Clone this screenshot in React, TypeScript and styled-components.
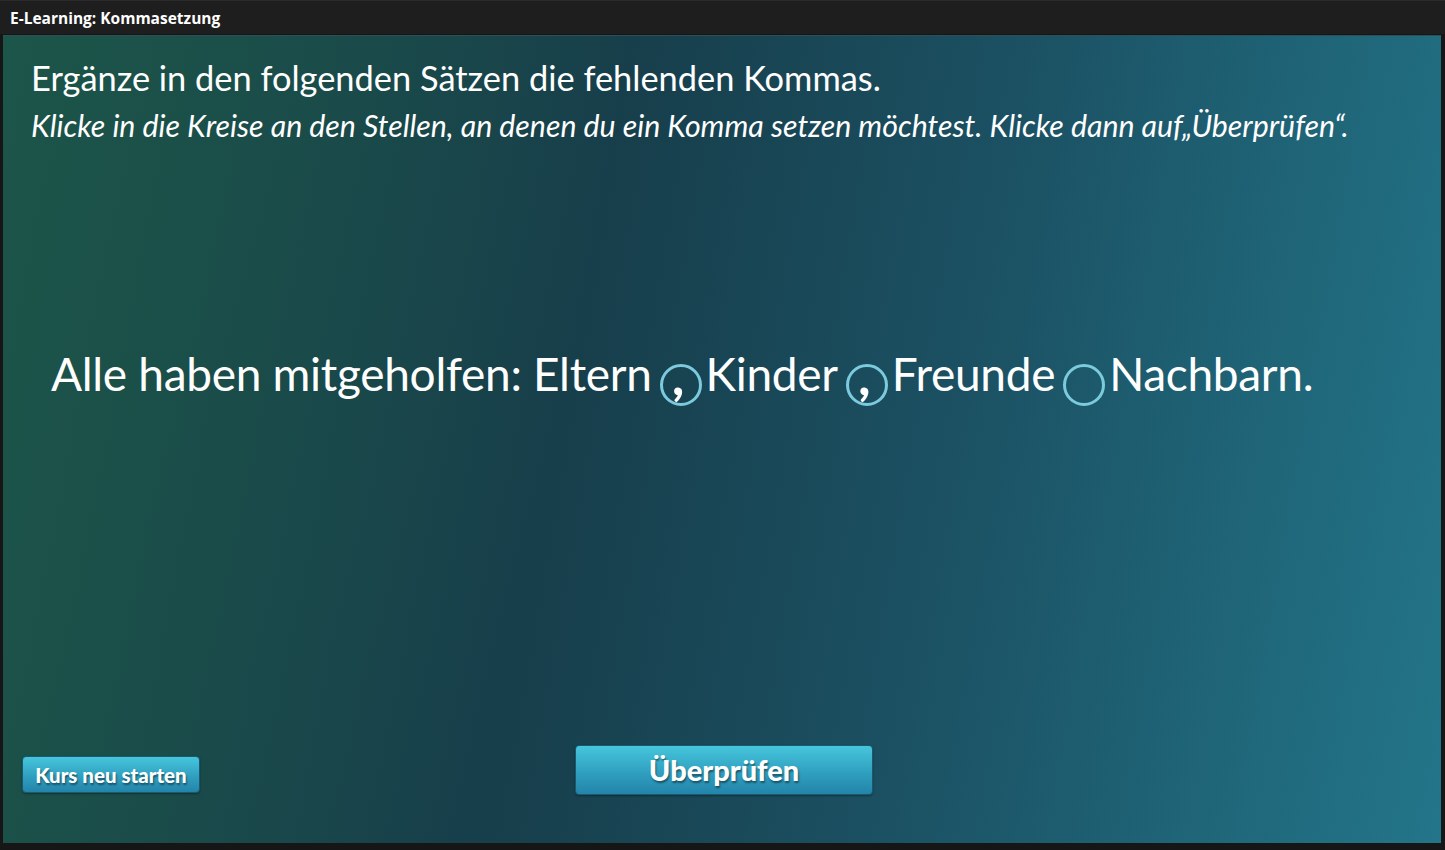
import React, { useState } from 'react'
import styled, { createGlobalStyle } from 'styled-components'

const GlobalStyle = createGlobalStyle`
  html, body {
    margin: 0;
    padding: 0;
    background: #141414;
  }
  body {
    font-family: 'Lato', 'Open Sans', sans-serif;
  }
`

const Window = styled.div`
  width: 1445px;
  height: 850px;
  display: flex;
  flex-direction: column;
  background: #161616;
  overflow: hidden;
`

const TitleBar = styled.div`
  height: 34px;
  flex: none;
  display: flex;
  align-items: center;
  padding: 0 10px;
  background: #1e1e1e;
  border-top: 1px solid #2a2a2a;
  box-sizing: border-box;
  color: #ffffff;
  font-family: 'Open Sans', sans-serif;
  font-weight: 700;
  font-size: 15.5px;
`

const Stage = styled.div`
  flex: none;
  height: 808px;
  margin: 1px 4px 0 3px;
  display: flex;
  flex-direction: column;
  box-sizing: border-box;
  border-top: 1px solid #2d4f57;
  background:
    linear-gradient(105deg, rgba(30, 90, 72, 0.55) 0%, rgba(30, 90, 72, 0) 40%),
    linear-gradient(100deg, #1a4f4a 0%, #173e4b 40%, #1b5163 65%, #237589 100%);
  color: #ffffff;
`

const Header = styled.div`
  padding: 22px 0 0 28px;
  display: flex;
  flex-direction: column;
  gap: 9px;
`

const Heading = styled.h1`
  margin: 0;
  font-weight: 400;
  font-size: 34.4px;
  line-height: 40px;
`

const Instruction = styled.p`
  margin: 0;
  font-style: italic;
  font-weight: 400;
  font-size: 30.3px;
  line-height: 36px;
`

const SentenceArea = styled.div`
  flex: 1;
  display: flex;
  align-items: center;
  padding: 0 0 140px 48px;
`

const Sentence = styled.div`
  display: flex;
  align-items: center;
  font-size: 46px;
  letter-spacing: -0.3px;
  white-space: pre;
`

const Word = styled.span`
  line-height: 1;
`

const Gap = styled.button<{ $set: boolean }>`
  width: 42px;
  height: 42px;
  margin: 22px 4px 0 8px;
  padding: 0;
  border-radius: 50%;
  border: 3px solid #7ccadd;
  background: transparent;
  color: #ffffff;
  font-family: 'Lato', sans-serif;
  font-weight: 900;
  font-style: italic;
  font-size: 50px;
  line-height: 1;
  cursor: pointer;
  display: flex;
  align-items: center;
  justify-content: center;
  box-sizing: border-box;

  span {
    display: block;
    transform: translate(-1px, -9px);
    visibility: ${(p) => (p.$set ? 'visible' : 'hidden')};
  }
`

const Footer = styled.div`
  display: grid;
  grid-template-columns: 1fr auto 1fr;
  align-items: end;
  padding: 0 15px 48px 19px;
`

const ActionButton = styled.button<{ $large?: boolean }>`
  justify-self: ${(p) => (p.$large ? 'center' : 'start')};
  width: ${(p) => (p.$large ? '298px' : '178px')};
  height: ${(p) => (p.$large ? '50px' : '37px')};
  margin-bottom: ${(p) => (p.$large ? '0' : '2px')};
  border-radius: 4px;
  border: 1px solid #1a5a70;
  background: linear-gradient(180deg, #46c6dc 0%, #30a0c0 55%, #2384aa 100%);
  box-shadow: 0 1px 2px rgba(0, 0, 0, 0.35);
  color: #ffffff;
  font-family: 'Lato', sans-serif;
  font-weight: 900;
  font-size: ${(p) => (p.$large ? '29px' : '20.5px')};
  text-shadow: 1px 2px 2px rgba(0, 0, 0, 0.45);
  cursor: pointer;
  padding: 0 0 ${(p) => (p.$large ? '2px' : '0')} 0;
`

const words = ['Alle haben mitgeholfen: Eltern', 'Kinder', 'Freunde', 'Nachbarn.']

export default function App() {
  const [commas, setCommas] = useState([true, true, false])

  const toggle = (i: number) =>
    setCommas((c) => c.map((v, j) => (j === i ? !v : v)))

  return (
    <>
      <GlobalStyle />
      <Window>
        <TitleBar>E-Learning: Kommasetzung</TitleBar>
        <Stage>
          <Header>
            <Heading>Ergänze in den folgenden Sätzen die fehlenden Kommas.</Heading>
            <Instruction>
              Klicke in die Kreise an den Stellen, an denen du ein Komma setzen möchtest. Klicke dann auf„Überprüfen“.
            </Instruction>
          </Header>
          <SentenceArea>
            <Sentence>
              {words.map((w, i) => (
                <React.Fragment key={w}>
                  <Word>{w}</Word>
                  {i < commas.length && (
                    <Gap $set={commas[i]} onClick={() => toggle(i)}>
                      <span>,</span>
                    </Gap>
                  )}
                </React.Fragment>
              ))}
            </Sentence>
          </SentenceArea>
          <Footer>
            <ActionButton>Kurs neu starten</ActionButton>
            <ActionButton $large>Überprüfen</ActionButton>
            <div />
          </Footer>
        </Stage>
      </Window>
    </>
  )
}
